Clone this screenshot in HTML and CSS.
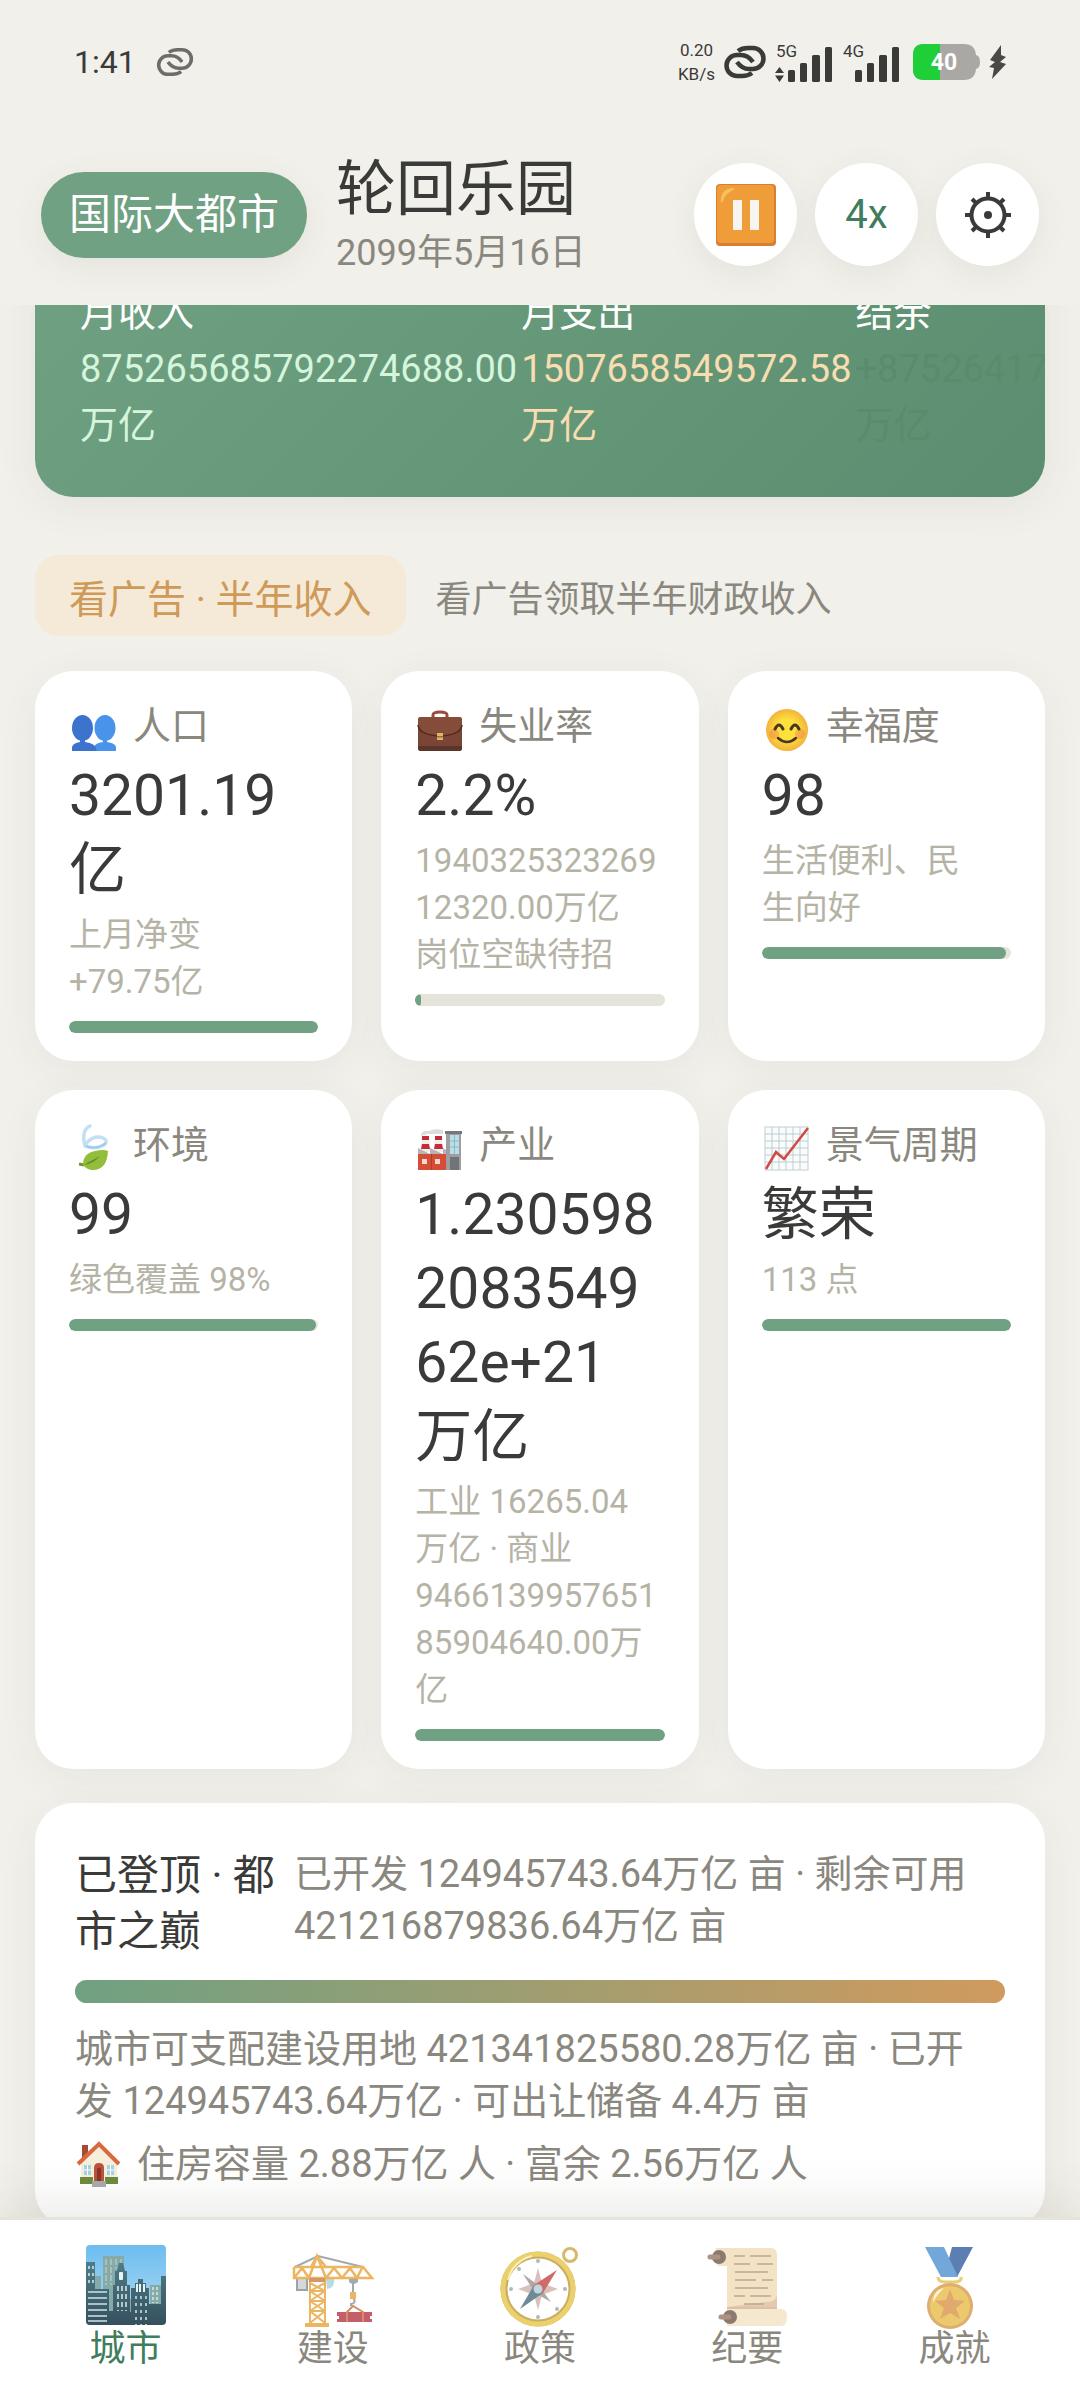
FILE: index.html
```html
<!DOCTYPE html>
<html lang="zh-CN">

<head>
    <meta charset="UTF-8">
    <meta name="viewport" content="width=device-width, initial-scale=1.0">
    <title>轮回乐园</title>
    <link rel="stylesheet" href="styles.css">
</head>

<body>
    <div class="status-bar">
        <span class="time">1:41</span>
        <svg class="link-small" width="38" height="30" viewBox="0 0 42 34" fill="none" stroke="#6d6c68" stroke-width="4">
            <path d="M14 6 Q18 3 24 3 H29 A10.500 10.500 0 0 1 29 24 H25 Q18 24 13 17" />
            <path d="M28 28 Q24 31 18 31 H13 A10.500 10.500 0 0 1 13 10 H17 Q24 10 29 17" />
        </svg>
        <div class="status-right">
            <span class="speed">0.20<br>KB/s</span>
            <svg width="42" height="34" viewBox="0 0 42 34" fill="none" stroke="#3a3a38" stroke-width="4.500">
                <path d="M14 6 Q18 3 24 3 H29 A10.500 10.500 0 0 1 29 24 H25 Q18 24 13 17" />
                <path d="M28 28 Q24 31 18 31 H13 A10.500 10.500 0 0 1 13 10 H17 Q24 10 29 17" />
            </svg>
            <svg width="58" height="40" viewBox="0 0 58 40" fill="#3a3a38">
                <text x="1" y="15" font-size="17">5G</text>
                <path d="M0 31 L4.500 25 L9 31 Z M0 33.500 H9 L4.500 40 Z" />
                <rect x="13" y="28" width="7" height="12" rx="1.500" />
                <rect x="25" y="21" width="7" height="19" rx="1.500" />
                <rect x="37" y="13" width="8" height="27" rx="1.500" />
                <rect x="50" y="5" width="7" height="35" rx="1.500" />
            </svg>
            <svg width="58" height="40" viewBox="0 0 58 40" fill="#3a3a38">
                <text x="1" y="15" font-size="17">4G</text>
                <rect x="13" y="28" width="7" height="12" rx="1.500" />
                <rect x="25" y="21" width="7" height="19" rx="1.500" />
                <rect x="37" y="13" width="8" height="27" rx="1.500" />
                <rect x="50" y="5" width="7" height="35" rx="1.500" />
            </svg>
            <svg class="battery" width="67" height="36" viewBox="0 0 67 36">
                <path d="M11 0 H51 Q62 0 63 11 Q67 12 67 18 Q67 24 63 25 Q62 36 51 36 H11 Q0 36 0 25 V11 Q0 0 11 0 Z" fill="#a9a8a4" />
                <path d="M11 0 H27 V36 H11 Q0 36 0 25 V11 Q0 0 11 0 Z" fill="#1fcf38" />
                <text x="31" y="26" font-size="23" font-weight="bold" fill="#fff" text-anchor="middle">40</text>
            </svg>
            <svg class="bolt" width="17" height="34" viewBox="0 0 17 34" fill="#4a4946">
                <path d="M12 0 L1 15 L6 17 L0 22 L5 23 L3 34 L17 19 L11 17 L17 12 L12 10 Z" />
            </svg>
        </div>
    </div>

    <header class="header">
        <span class="level">国际大都市</span>
        <div class="city">
            <h1>轮回乐园</h1>
            <p>2099年5月16日</p>
        </div>
        <div class="controls">
            <button type="button" aria-label="暂停">
                <svg width="60" height="62" viewBox="0 0 60 62">
                    <rect width="60" height="62" rx="4" fill="#d97f35" />
                    <rect x="1" y="1" width="57" height="58" rx="4" fill="#ef9d38" />
                    <path d="M5 18 Q4 5 17 4 Q20 4 17 6 Q9 10 7 17 Q6 20 5 18 Z" fill="#f9c05a" />
                    <path d="M17 16 H26 V46 H17 Z M34 16 H43 V46 H34 Z" fill="#f7f5f2" />
                </svg>
            </button>
            <button type="button" class="speed-btn">4x</button>
            <button type="button" aria-label="设置">
                <svg width="46" height="46" viewBox="0 0 46 46" fill="none" stroke="#3a3a38" stroke-width="4">
                    <circle cx="23" cy="23" r="16.500" />
                    <circle cx="23" cy="23" r="4" fill="#3a3a38" stroke="none" />
                    <path d="M23 0 V7 M23 39 V46 M0 23 H7 M39 23 H46 M7 7 L12 12 M34 34 L39 39 M39 7 L34 12 M12 34 L7 39" />
                </svg>
            </button>
        </div>
    </header>

    <main class="content">
        <section class="finance">
            <div class="income">
                <span>月收入</span>
                <b>875265685792274688.00万亿</b>
            </div>
            <div class="expense">
                <span>月支出</span>
                <b>1507658549572.58万亿</b>
            </div>
            <div class="balance">
                <span>结余</span>
                <b>+875264178133725120.00万亿</b>
            </div>
        </section>

        <div class="ad-row">
            <button type="button" class="ad-btn">看广告 · 半年收入</button>
            <span>看广告领取半年财政收入</span>
        </div>

        <section class="stats">
            <div class="stat">
                <div class="stat-label">
                    <svg width="48" height="48" viewBox="0 0 48 48">
                        <path d="M25 46 V42 Q26 38 34 37 V33 H38 V37 Q46 38 47 42 V46 Z" fill="#4a93ea" />
                        <ellipse cx="36" cy="23" rx="10.500" ry="13" fill="#4a93ea" />
                        <path d="M3 46 V42 Q4 38 11 37 V33 H16 V37 Q27 38 28 46 Z" fill="#3c73cd" />
                        <ellipse cx="13.500" cy="23" rx="10.500" ry="13" fill="#3c73cd" />
                    </svg>
                    <span>人口</span>
                </div>
                <div class="stat-value">3201.19<span>亿</span></div>
                <div class="stat-note">上月净变<br>+79.75亿</div>
                <div class="bar"><i style="width: 100%"></i></div>
            </div>

            <div class="stat">
                <div class="stat-label">
                    <svg width="48" height="48" viewBox="0 0 48 48">
                        <path d="M18 13 V10 Q18 7 25 7 Q32 7 32 10 V13" fill="none" stroke="#9c4b42" stroke-width="3" />
                        <rect x="3" y="12" width="44" height="34" rx="3" fill="#794536" />
                        <path d="M3 41 H47 V43 Q47 46 44 46 H6 Q3 46 3 43 Z" fill="#5a3528" />
                        <path d="M3 15 Q3 12 6 12 H44 Q47 12 47 15 V20 Q46 30 25 31 Q4 30 3 20 Z" fill="#864c3a" />
                        <path d="M3 20 Q4 30 25 31 Q46 30 47 20" fill="none" stroke="#4d2a20" stroke-width="1.500" />
                        <rect x="22" y="28" width="6" height="7" fill="#e2b36b" />
                        <rect x="22" y="31" width="6" height="1.500" fill="#9a6d3c" />
                    </svg>
                    <span>失业率</span>
                </div>
                <div class="stat-value">2.2%</div>
                <div class="stat-note">1940325323269<br>12320.00万亿<br>岗位空缺待招</div>
                <div class="bar"><i style="width: 2.2%"></i></div>
            </div>

            <div class="stat">
                <div class="stat-label">
                    <svg width="48" height="48" viewBox="0 0 48 48">
                        <defs>
                            <radialGradient id="face">
                                <stop offset="0.5" stop-color="#fde03c" />
                                <stop offset="1" stop-color="#f3b23c" />
                            </radialGradient>
                        </defs>
                        <circle cx="25" cy="25" r="21" fill="url(#face)" />
                        <circle cx="12" cy="29" r="5" fill="#f08a4b" opacity=".5" />
                        <circle cx="38" cy="29" r="5" fill="#f08a4b" opacity=".5" />
                        <path d="M13 24 Q17 16 21 24 M29 24 Q33 16 37 24" fill="none" stroke="#4a3526" stroke-width="3" stroke-linecap="round" />
                        <path d="M16 33 Q25 41 34 33" fill="none" stroke="#4a3526" stroke-width="2.500" stroke-linecap="round" />
                    </svg>
                    <span>幸福度</span>
                </div>
                <div class="stat-value">98</div>
                <div class="stat-note">生活便利、民<br>生向好</div>
                <div class="bar"><i style="width: 98%"></i></div>
            </div>

            <div class="stat">
                <div class="stat-label">
                    <svg width="48" height="48" viewBox="0 0 48 48">
                        <path d="M21 2 Q12 6 16 22 Q26 26 35 21 Q40 17 34 14 Q24 10 16 21" fill="none" stroke="#c3dff4" stroke-width="3.500" stroke-linecap="round" />
                        <path d="M17 22 Q28 26 37 19" fill="none" stroke="#9cc9ee" stroke-width="2" />
                        <path d="M10 40 L15 41" stroke="#78942f" stroke-width="3" />
                        <path d="M14 41 Q14 29 26 27 Q35 25 39 27 Q38 46 24 46 Q18 46 14 41 Z" fill="#93bd3b" />
                        <path d="M15 41 Q24 40 31 32 Q24 36 18 39" fill="#5f8f2c" />
                    </svg>
                    <span>环境</span>
                </div>
                <div class="stat-value">99</div>
                <div class="stat-note">绿色覆盖 98%</div>
                <div class="bar"><i style="width: 99%"></i></div>
            </div>

            <div class="stat">
                <div class="stat-label">
                    <svg width="48" height="48" viewBox="0 0 48 48">
                        <path d="M6 12 Q6 6 14 7 Q20 4 28 6 V10 H12 Z" fill="#dcdcde" />
                        <path d="M7 12 H14 L15 28 H6 Z M20 12 H27 L28 28 H19 Z" fill="#f3ecec" />
                        <path d="M7 12 H14 V16 H7 Z M7 20 H14 L15 25 H6 Z M20 12 H27 V16 H20 Z M20 20 H27 L28 25 H19 Z" fill="#c22d3a" />
                        <rect x="31" y="8" width="15" height="38" fill="#9c9ea2" />
                        <rect x="30" y="7" width="17" height="3" fill="#74777b" />
                        <rect x="35" y="11" width="9" height="19" fill="#b9e0ea" />
                        <path d="M35 17 H44 M35 23 H44 M39.500 11 V30" stroke="#8fb7c2" />
                        <rect x="35" y="33" width="9" height="13" fill="#707378" />
                        <path d="M3 46 V24 L15 30 V24 L28 30 V24 L31 26 V46 Z" fill="#b4b3b5" />
                        <path d="M3 30 H31 V46 H3 Z" fill="#d64d36" />
                        <path d="M16.500 30 V46" stroke="#b7392b" />
                        <path d="M7 35 H12 V40 H7 Z M20 35 H25 V40 H20 Z" fill="#f3d9cf" />
                    </svg>
                    <span>产业</span>
                </div>
                <div class="stat-value">1.230598208354962e+21<span>万亿</span></div>
                <div class="stat-note">工业 16265.04<br>万亿 · 商业<br>9466139957651<br>85904640.00万<br>亿</div>
                <div class="bar"><i style="width: 100%"></i></div>
            </div>

            <div class="stat">
                <div class="stat-label">
                    <svg width="48" height="48" viewBox="0 0 48 48">
                        <rect x="3" y="3" width="43" height="43" fill="#fafcfc" stroke="#c3d0d4" />
                        <path d="M10 3 V46 M17 3 V46 M24 3 V46 M31 3 V46 M38 3 V46 M3 10 H46 M3 17 H46 M3 24 H46 M3 31 H46 M3 38 H46" stroke="#bdccd1" />
                        <path d="M4 45 L14 28 L22 35 L46 4" fill="none" stroke="#d04a45" stroke-width="2.500" />
                    </svg>
                    <span>景气周期</span>
                </div>
                <div class="stat-value">繁荣</div>
                <div class="stat-note">113 点</div>
                <div class="bar"><i style="width: 100%"></i></div>
            </div>
        </section>

        <section class="land">
            <div class="land-head">
                <h2>已登顶 · 都市之巅</h2>
                <p>已开发 124945743.64万亿 亩 · 剩余可用 421216879836.64万亿 亩</p>
            </div>
            <div class="land-bar"></div>
            <p>城市可支配建设用地 421341825580.28万亿 亩 · 已开<br>发 124945743.64万亿 · 可出让储备 4.4万 亩</p>
            <p class="housing">
                <svg width="48" height="48" viewBox="0 0 48 48">
                    <rect x="7" y="5" width="6" height="17" fill="#a94a33" />
                    <path d="M6 23 L24 6 L42 23 V43 H6 Z" fill="#f5efdc" />
                    <path d="M3 24 L24 4 L44 24" fill="none" stroke="#d9693f" stroke-width="4" />
                    <path d="M9 25 H16 V35 H9 Z M32 25 H39 V35 H32 Z" fill="#a8d3e4" />
                    <path d="M12.500 25 V35 M9 30 H16 M35.500 25 V35 M32 30 H39" stroke="#fff" />
                    <path d="M19 42 V28 Q19 23 24 23 Q29 23 29 28 V42 Z" fill="#bf5139" />
                    <path d="M22 41 V29 Q24 26 26 29 V41 Z" fill="#87352c" />
                    <path d="M5 37 H18 V44 H5 Z M30 37 H43 V44 H30 Z" fill="#6e8b3d" />
                    <path d="M17 41 H31 V47 H17 Z" fill="#a7aaae" />
                </svg>
                <span>住房容量 2.88万亿 人 · 富余 2.56万亿 人</span>
            </p>
        </section>
    </main>

    <nav class="tabs">
        <a href="#city" class="active">
            <svg width="80" height="80" viewBox="0 0 80 80">
                <defs>
                    <linearGradient id="sky" x1="0" y1="0" x2="0" y2="1">
                        <stop offset="0" stop-color="#6dbdf0" />
                        <stop offset="1" stop-color="#b5ddf3" />
                    </linearGradient>
                    <linearGradient id="tower" x1="0" y1="0" x2="0" y2="1">
                        <stop offset="0" stop-color="#4d7d8a" />
                        <stop offset="1" stop-color="#36505d" />
                    </linearGradient>
                    <clipPath id="frame"><rect width="80" height="80" rx="4" /></clipPath>
                </defs>
                <g clip-path="url(#frame)">
                    <rect width="80" height="80" fill="url(#sky)" />
                    <path d="M9 31 H15 V45 H9 Z M17 11 H38 V66 H17 Z M41 54 H46 V68 H41 Z M64 40 H75 V60 H64 Z" fill="#84aaa9" />
                    <path d="M20 14 V40 M25 14 V40 M30 14 V24 M35 14 V20" stroke="#a6c0b5" stroke-width="2" stroke-dasharray="6 2" />
                    <path d="M67 42 V58 M71 42 V58" stroke="#c0d9d3" stroke-width="2" stroke-dasharray="3 2" />
                    <path d="M0 17 H9 V44 H23 V66 H27 V40 H29 V26 H31 L33 18 H37 L39 26 H41 V40 H44 V67 H45 V43 H49 V38 H52 V34 H57 V38 H60 V43 H63 V59 H75 V31 H80 V80 H0 Z" fill="url(#tower)" />
                    <rect x="33" y="27" width="4" height="8" rx="1" fill="#e8f3f3" />
                    <path d="M2 47 H21 M2 53 H21 M2 59 H21 M2 65 H21 M2 71 H21 M2 76 H21" stroke="#cfe3e5" stroke-width="1.500" />
                    <path d="M32 41 V66 M36 41 V66 M40 41 V66" stroke="#dcebea" stroke-width="1.500" stroke-dasharray="5 3" />
                    <path d="M51 39 V47 M54 39 V47 M58 39 V47" stroke="#e8f3f3" stroke-width="2" />
                    <path d="M50 51 V80 M55 51 V80 M60 51 V80" stroke="#a8c4c9" stroke-width="2" stroke-dasharray="3 4" />
                    <path d="M3 21 V42 M7 21 V42" stroke="#dcebea" stroke-width="1.500" stroke-dasharray="3 4" />
                </g>
            </svg>
            <span>城市</span>
        </a>
        <a href="#build">
            <svg width="80" height="80" viewBox="0 0 80 80" fill="none">
                <path d="M2 22 L25 11 L70 22" stroke="#7c858c" stroke-width="2" />
                <path d="M4 33 H14 V45 H4 Z" fill="#bfc8cc" stroke="#737c81" stroke-width="2" />
                <path d="M33 34 H41 Q42 43 34 44 Z" fill="#9fcbd3" />
                <path d="M17 34 V80 M32 34 V80 M17 38 L32 46 M32 38 L17 46 L32 56 M32 46 L17 56 L32 66 M32 56 L17 66 L32 78 M32 66 L17 78 M17 46 H32 M17 56 H32 M17 66 H32" stroke="#e5961f" stroke-width="2" />
                <path d="M1 22 V33 H79 L70 22 H1 M1 33 L9 23 L16 33 L24 11 L33 33 L41 23 L49 33 L57 23 L64 33 L69 23 M18 22 L24 11 L33 22" stroke="#e5961f" stroke-width="2.500" />
                <path d="M16 33 H32 V37 H16 Z" fill="#c56c24" />
                <path d="M12 78 H36 V82 H12 Z" fill="#e5961f" />
                <path d="M56 34 H65 V37 Q60 41 56 37 Z" fill="#7c858c" />
                <path d="M60 38 V47 M60 53 Q64 58 58 59 V61" stroke="#7c858c" stroke-width="2" />
                <rect x="57" y="47" width="6" height="7" fill="#e5961f" />
                <path d="M44 67 H79 V71 H77 V74 H79 V77 H44 V74 H46 V71 H44 Z" fill="#ad1b2f" />
                <path d="M54 77 V67 L60 61 L70 67 V77" stroke="#c85d24" stroke-width="2" />
            </svg>
            <span>建设</span>
        </a>
        <a href="#policy">
            <svg width="80" height="80" viewBox="0 0 80 80">
                <circle cx="70" cy="10" r="6.500" fill="none" stroke="#c69e2d" stroke-width="3" />
                <circle cx="38" cy="44" r="34" fill="#fff" stroke="#b28b22" stroke-width="7" />
                <circle cx="38" cy="44" r="35" fill="none" stroke="#e3bd2d" stroke-width="5" />
                <path d="M8 35 A32 32 0 0 1 32 11" fill="none" stroke="#f7ea9c" stroke-width="2" />
                <path d="M38 23 L42 38 L58 44 L42 50 L38 65 L34 50 L18 44 L34 38 Z" fill="#c8a89d" />
                <path d="M23 29 L38 40 L51 57 L35 48 Z" fill="#8c8680" />
                <path d="M57 25 L43 48 L34 40 Z" fill="#bc2c2b" />
                <path d="M20 64 L34 40 L43 48 Z" fill="#31596a" />
                <circle cx="38" cy="44" r="4.500" fill="#a5c5d2" />
                <g fill="#999">
                    <circle cx="11" cy="44" r="2" />
                    <circle cx="65" cy="44" r="2" />
                    <circle cx="38" cy="16" r="2" />
                    <circle cx="38" cy="72" r="2" />
                    <circle cx="19" cy="24" r="2" />
                    <circle cx="57" cy="64" r="2" />
                </g>
            </svg>
            <span>政策</span>
        </a>
        <a href="#log">
            <svg width="80" height="80" viewBox="0 0 80 80" fill="none">
                <path d="M9 3 H64 Q70 3 70 11 V66 H20 V21 H11 Q4 12 9 3 Z" fill="#efd7ac" />
                <path d="M58 57 Q70 57 70 49 V64 H20 V62 Z" fill="#d8b58b" />
                <path d="M20 64 H74 Q80 64 80 72 Q80 81 74 81 H20 Z" fill="#f3dfba" />
                <path d="M20 63 H70" stroke="#c9a980" stroke-width="2" />
                <circle cx="12" cy="12" r="7" fill="#5b4234" />
                <circle cx="23" cy="72" r="7" fill="#5b4234" />
                <path d="M3 12 H11 M14 72 H22" stroke="#8b6450" stroke-width="5" stroke-linecap="round" />
                <path d="M27 11 H38 M43 11 H64 M27 19 H43 M50 19 H66 M28 27 H61 M28 35 H49 M55 35 H66 M28 43 H61 M27 51 H38 M43 51 H64 M37 59 H57" stroke="#a28464" stroke-width="1.500" />
            </svg>
            <span>纪要</span>
        </a>
        <a href="#achievement">
            <svg width="80" height="80" viewBox="0 0 80 80">
                <path d="M38 2 H59 L43 32 H30 Z" fill="#164a92" />
                <path d="M11 2 H30 L44 32 H27 Z" fill="#3683ca" />
                <path d="M24 32 Q24 37 31 37 H40 Q48 37 47 32" fill="none" stroke="#e0bc31" stroke-width="3" />
                <circle cx="36" cy="61" r="23" fill="#cf8b36" />
                <circle cx="36" cy="61" r="20" fill="#e3b32f" />
                <path d="M19 58 Q19 45 30 43 Q23 49 19 58 Z" fill="#fff0be" />
                <path d="M36 44 L40 55 L51 56 L42 63 L46 74 L36 68 L26 74 L30 63 L21 56 L32 55 Z" fill="#d48531" />
            </svg>
            <span>成就</span>
        </a>
    </nav>
</body>

</html>
```
FILE: styles.css
```css
* {
    box-sizing: border-box;
    margin: 0;
    padding: 0;
}

body {
    height: 100vh;
    display: flex;
    flex-direction: column;
    overflow: hidden;
    background: #f1f0ea;
    color: #3a3a38;
    font-family: Roboto, "Noto Sans CJK SC", sans-serif;
}

button {
    border: none;
    font-family: inherit;
}

h1,
h2,
b {
    font-weight: inherit;
}

svg {
    display: block;
    flex-shrink: 0;
    overflow: visible;
}

/* status bar */
.status-bar {
    display: flex;
    align-items: center;
    height: 124px;
    padding: 0 74px;
}

.time {
    font-size: 32px;
}

.link-small {
    margin-left: 20px;
}

.status-right {
    display: flex;
    align-items: center;
    gap: 9px;
    margin-left: auto;
}

.speed {
    font-size: 17px;
    line-height: 24px;
    text-align: center;
}

.battery {
    margin-left: 4px;
}

/* header */
.header {
    display: flex;
    align-items: center;
    height: 181px;
    padding: 0 41px;
}

.level {
    padding: 14px 28px;
    border-radius: 43px;
    background: #6fa182;
    color: #fff;
    font-size: 42px;
    line-height: 58px;
    box-shadow: 0 8px 32px rgba(80, 75, 60, 0.08);
}

.city {
    margin-left: 29px;
}

.city h1 {
    font-size: 60px;
    line-height: 76px;
}

.city p {
    color: #8a877e;
    font-size: 36px;
    line-height: 50px;
}

.controls {
    display: flex;
    gap: 18px;
    margin-left: auto;
}

.controls button {
    display: flex;
    align-items: center;
    justify-content: center;
    width: 103px;
    height: 103px;
    border-radius: 50%;
    background: #fff;
    color: #3a3a38;
    box-shadow: 0 8px 32px rgba(80, 75, 60, 0.08);
}

.controls .speed-btn {
    color: #3f7d5c;
    font-size: 40px;
}

/* scrolled content */
.content {
    flex: 1;
    min-height: 0;
    padding: 0 35px;
    overflow: hidden;
}

.finance {
    display: flex;
    gap: 4px;
    margin-top: -80px;
    padding: 60px 45px 44px;
    border-radius: 38px;
    background: linear-gradient(135deg, #6fa182, #5b8e70);
    color: #fff;
    font-size: 38px;
    line-height: 56px;
    overflow: hidden;
    box-shadow: 0 8px 40px rgba(80, 75, 60, 0.08);
}

.finance span,
.finance b {
    display: block;
}

.income b {
    color: #d5f5dc;
}

.expense b {
    color: #f7ddb0;
}

.balance b {
    color: #5a8b6d;
}

.ad-row {
    display: flex;
    align-items: center;
    gap: 30px;
    margin: 58px 0 35px;
    color: #8a877e;
    font-size: 36px;
}

.ad-btn {
    height: 81px;
    padding: 0 34px;
    border-radius: 24px;
    background: #f5e9d7;
    color: #cf9a57;
    font-size: 39px;
}

.stats {
    display: grid;
    grid-template-columns: repeat(3, minmax(0, 1fr));
    gap: 29px;
}

.stat {
    padding: 32px 34px 28px;
    border-radius: 38px;
    background: #fff;
    box-shadow: 0 8px 40px rgba(80, 75, 60, 0.06);
}

.stat-label {
    display: flex;
    align-items: center;
    gap: 16px;
    height: 52px;
    color: #8a877e;
    font-size: 38px;
    line-height: 46px;
    white-space: nowrap;
}

.stat-label span {
    padding-bottom: 6px;
}

.stat-value {
    margin: 4px 0;
    font-size: 57px;
    line-height: 74px;
    overflow-wrap: anywhere;
}

.stat-value span {
    display: inline-block;
}

.stat-note {
    color: #b5b3a5;
    font-size: 33px;
    line-height: 47px;
}

.bar {
    height: 12px;
    margin-top: 16px;
    border-radius: 6px;
    background: #e5e4da;
    overflow: hidden;
}

.bar i {
    display: block;
    height: 100%;
    border-radius: 6px;
    background: #6fa182;
}

/* land card */
.land {
    margin-top: 34px;
    padding: 45px 40px 38px;
    border-radius: 38px;
    background: #fff;
    color: #8a877e;
    font-size: 38px;
    line-height: 52px;
    box-shadow: 0 8px 40px rgba(80, 75, 60, 0.06);
}

.land-head {
    display: flex;
}

.land-head h2 {
    flex: 0 0 219px;
    color: #3a3a38;
    font-size: 42px;
    line-height: 56px;
}

.land-bar {
    height: 23px;
    margin: 20px 0;
    border-radius: 12px;
    background: linear-gradient(90deg, #6fa182, #d09a5e);
}

.housing {
    display: flex;
    align-items: center;
    gap: 14px;
    margin-top: 11px;
}

/* bottom tabs */
.tabs {
    position: relative;
    display: flex;
    height: 184px;
    padding: 25px 22px 0;
    border-top: 3px solid #e5e4da;
    background: #fff;
    box-shadow: 0 -12px 48px rgba(80, 75, 60, 0.12);
}

.tabs a {
    flex: 1;
    display: flex;
    flex-direction: column;
    align-items: center;
    color: #8a877e;
    font-size: 36px;
    line-height: 48px;
    text-decoration: none;
}

.tabs svg {
    opacity: 0.7;
}

.tabs .active {
    color: #3f7d5c;
}

.tabs .active svg {
    opacity: 1;
}
```
